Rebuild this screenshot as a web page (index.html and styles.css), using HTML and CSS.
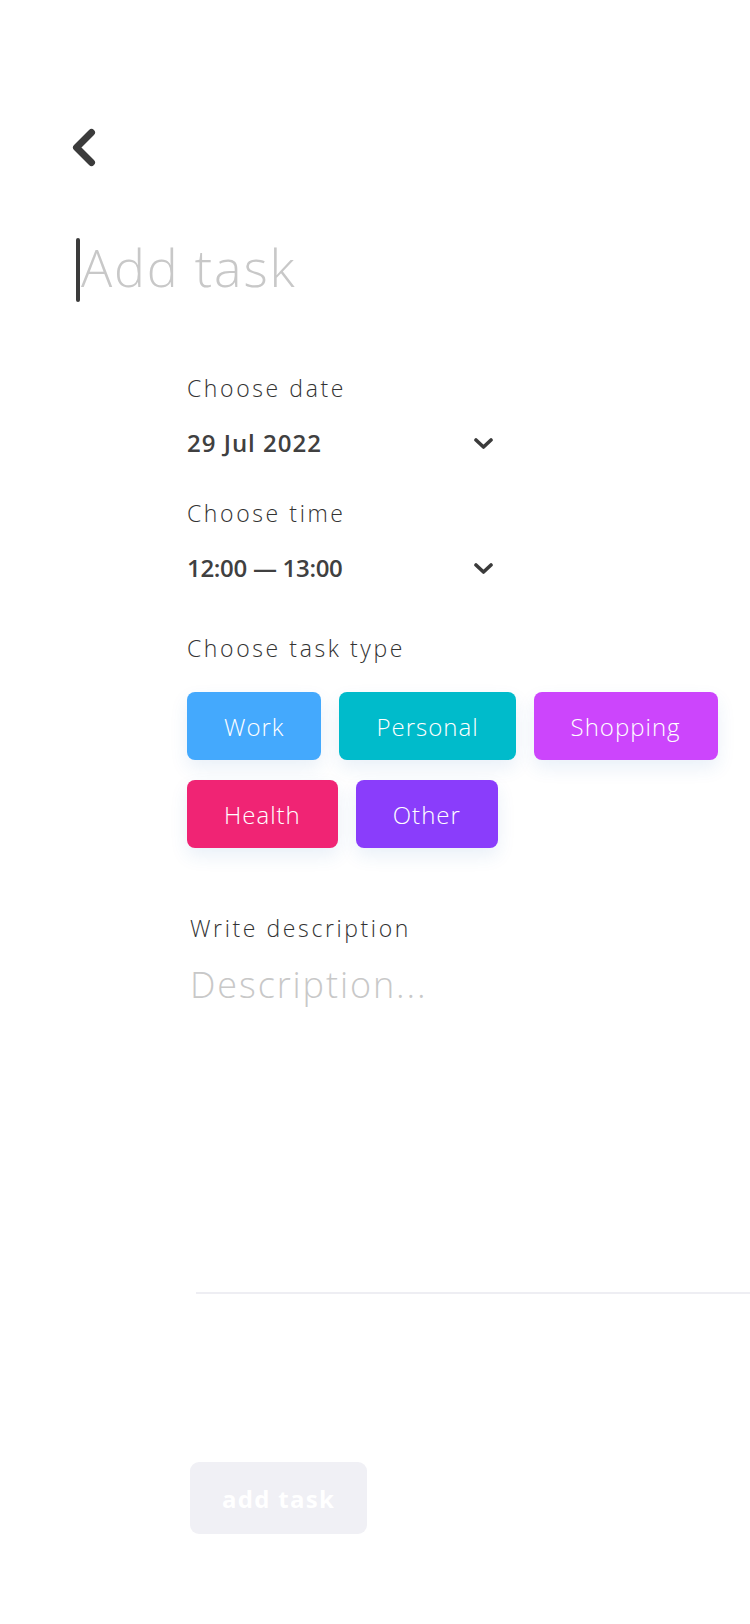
FILE: index.html
```html
<!DOCTYPE html>
<html lang="en">
<head>
<meta charset="utf-8">
<title>Add task</title>
<link rel="stylesheet" href="styles.css">
</head>
<body>
<div class="page">
  <button class="back" aria-label="Back">
    <svg width="28" height="44" viewBox="0 0 28 44"><polyline points="21.5,6.5 6.5,21.5 21.5,36.5" fill="none" stroke="#3b3b3b" stroke-width="7" stroke-linecap="round" stroke-linejoin="round"/></svg>
  </button>

  <div class="title-row">
    <span class="cursor"></span>
    <span class="title">Add task</span>
  </div>

  <div class="form">
    <div class="label">Choose date</div>
    <div class="select-row">
      <span class="value value-date">29 Jul 2022</span>
      <svg class="caret" width="19" height="11" viewBox="0 0 19 11"><polyline points="2,2 9.5,9 17,2" fill="none" stroke="#3b3b3b" stroke-width="3.6" stroke-linecap="round" stroke-linejoin="round"/></svg>
    </div>

    <div class="label label-gap">Choose time</div>
    <div class="select-row">
      <span class="value value-time">12:00 — 13:00</span>
      <svg class="caret" width="19" height="11" viewBox="0 0 19 11"><polyline points="2,2 9.5,9 17,2" fill="none" stroke="#3b3b3b" stroke-width="3.6" stroke-linecap="round" stroke-linejoin="round"/></svg>
    </div>

    <div class="label label-gap-lg">Choose task type</div>
    <div class="chips">
      <span class="chip chip-work">Work</span>
      <span class="chip chip-personal">Personal</span>
      <span class="chip chip-shopping">Shopping</span>
      <span class="chip chip-health">Health</span>
      <span class="chip chip-other">Other</span>
    </div>

    <div class="desc">
      <div class="label">Write description</div>
      <div class="desc-input">Description...</div>
    </div>
    <div class="divider"></div>

    <button class="submit">add task</button>
  </div>
</div>
</body>
</html>
```

FILE: styles.css
```css
html, body {
  margin: 0;
  padding: 0;
  background: #ffffff;
}
body {
  width: 750px;
  min-height: 1624px;
  font-family: "Open Sans", "Noto Sans", sans-serif;
  color: #3d3d3d;
}
.page {
  padding-top: 126px;
}
.back {
  display: block;
  margin: 0 0 0 70px;
  padding: 0;
  border: 0;
  background: none;
  width: 28px;
  height: 44px;
}
.back svg { display: block; }

.title-row {
  display: flex;
  align-items: flex-start;
  margin-top: 68px;
  margin-left: 76px;
  height: 64px;
}
.cursor {
  width: 4px;
  height: 64px;
  border-radius: 2px;
  background: #3b3b3b;
}
.title {
  margin-left: 1px;
  margin-top: -3px;
  font-size: 52px;
  line-height: 64px;
  font-weight: 300;
  letter-spacing: 1.8px;
  color: #c8c8c8;
}

.form {
  margin-left: 187px;
  margin-top: 71px;
}
.label {
  font-size: 23px;
  line-height: 30px;
  font-weight: 300;
  letter-spacing: 2.6px;
  color: #333333;
}
.label-gap { margin-top: 40px; }
.label-gap-lg { margin-top: 50px; }

.select-row {
  display: flex;
  align-items: center;
  justify-content: space-between;
  width: 306px;
  margin-top: 25px;
  height: 30px;
}
.value {
  font-size: 24px;
  line-height: 30px;
  font-weight: 600;
  color: #404040;
}
.value-date { letter-spacing: 1px; }
.value-time { letter-spacing: -0.3px; }
.caret { display: block; margin-top: 1px; }

.chips {
  display: flex;
  flex-wrap: wrap;
  column-gap: 18px;
  row-gap: 20px;
  margin-top: 29px;
  width: 563px;
}
.chip {
  display: flex;
  align-items: center;
  justify-content: center;
  height: 68px;
  padding: 0 37px;
  border-radius: 8px;
  color: #ffffff;
  font-size: 24px;
  font-weight: 300;
  letter-spacing: 1px;
  box-shadow: 0 8px 18px rgba(40, 110, 190, 0.10);
}
.chip-work { background: #44a9fd; }
.chip-personal { background: #00bbcb; }
.chip-shopping { background: #cc45fc; }
.chip-health { background: #f02474; }
.chip-other { background: #8a3dfb; }

.desc {
  margin-top: 65px;
  margin-left: 3px;
}
.desc-input {
  margin-top: 18px;
  font-size: 36px;
  line-height: 48px;
  font-weight: 300;
  letter-spacing: 1.9px;
  color: #c8c8c8;
  height: 331px;
}
.divider {
  margin-left: 9px;
  height: 2px;
  background: #eeeef3;
}

.submit {
  display: block;
  margin-top: 168px;
  margin-left: 3px;
  height: 72px;
  padding: 0 32px;
  border: 0;
  border-radius: 9px;
  background: #f0f0f5;
  color: #ffffff;
  font-family: "Open Sans", "Noto Sans", sans-serif;
  font-size: 24px;
  font-weight: 700;
  letter-spacing: 1.3px;
}
```
